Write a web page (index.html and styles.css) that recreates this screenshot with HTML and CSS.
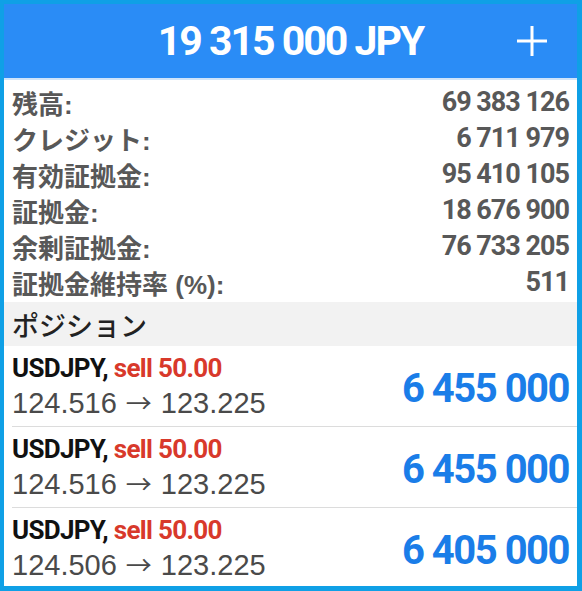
FILE: index.html
```html
<!DOCTYPE html>
<html lang="ja">
<head>
    <meta charset="UTF-8">
    <title>Account</title>
    <link rel="stylesheet" href="styles.css">
</head>
<body>
    <div class="frame">
        <div class="header">
            <span></span>
            <h1 class="balance">19 315 000 JPY</h1>
            <span class="add">
                <svg width="32" height="32" viewBox="0 0 32 32">
                    <path d="M16 1 V31 M1 16 H31" stroke="#fff" stroke-width="3" fill="none"/>
                </svg>
            </span>
        </div>

        <div class="summary">
            <div class="row"><span class="label">残高:</span><span class="value">69 383 126</span></div>
            <div class="row"><span class="label">クレジット:</span><span class="value">6 711 979</span></div>
            <div class="row"><span class="label">有効証拠金:</span><span class="value">95 410 105</span></div>
            <div class="row"><span class="label">証拠金:</span><span class="value">18 676 900</span></div>
            <div class="row"><span class="label">余剰証拠金:</span><span class="value">76 733 205</span></div>
            <div class="row"><span class="label">証拠金維持率 (%):</span><span class="value">511</span></div>
        </div>

        <div class="section">ポジション</div>

        <div class="positions">
            <div class="position">
                <div class="info">
                    <div class="symbol">USDJPY, <span class="sell">sell 50.00</span></div>
                    <div class="prices">124.516<span class="arrow">→</span>123.225</div>
                </div>
                <div class="profit">6 455 000</div>
            </div>
            <div class="position">
                <div class="info">
                    <div class="symbol">USDJPY, <span class="sell">sell 50.00</span></div>
                    <div class="prices">124.516<span class="arrow">→</span>123.225</div>
                </div>
                <div class="profit">6 455 000</div>
            </div>
            <div class="position">
                <div class="info">
                    <div class="symbol">USDJPY, <span class="sell">sell 50.00</span></div>
                    <div class="prices">124.506<span class="arrow">→</span>123.225</div>
                </div>
                <div class="profit">6 405 000</div>
            </div>
        </div>
    </div>
</body>
</html>
```

FILE: styles.css
```css
body {
    margin: 0;
    background: #0fa0e6;
    font-family: "Liberation Sans", "Noto Sans CJK JP", sans-serif;
}
.frame {
    width: 573px;
    height: 582px;
    margin: 4px 5px 5px 4px;
    background: #fff;
    overflow: hidden;
}
.header {
    height: 74px;
    background: #2a8cf6;
    border-bottom: 2px solid #cfe4fa;
    display: grid;
    grid-template-columns: 1fr auto 1fr;
    align-items: center;
}
.balance {
    margin: 0;
    color: #fff;
    font-family: "Roboto", sans-serif;
    font-size: 41px;
    font-weight: bold;
    letter-spacing: -2px;
}
.add {
    justify-self: end;
    padding-right: 29px;
    height: 32px;
}
.summary {
    padding: 4px 8px 2px 8px;
}
.row {
    height: 36px;
    display: flex;
    justify-content: space-between;
    align-items: center;
    color: #585858;
}
.label {
    font-family: "Liberation Sans", "Noto Sans CJK JP", sans-serif;
    font-size: 26px;
    font-weight: bold;
}
.value {
    font-family: "Roboto", sans-serif;
    font-size: 27px;
    font-weight: bold;
    letter-spacing: -1px;
}
.section {
    height: 44px;
    line-height: 46px;
    background: #f2f2f2;
    padding-left: 8px;
    color: #222;
    font-size: 27px;
    font-weight: 500;
    font-family: "Noto Sans CJK JP", sans-serif;
}
.position {
    height: 80px;
    margin-left: 8px;
    padding-right: 8px;
    border-bottom: 1px solid #dcdcdc;
    display: flex;
    justify-content: space-between;
    align-items: center;
}
.position:last-child {
    border-bottom: none;
}
.symbol {
    font-family: "Roboto", sans-serif;
    font-size: 26px;
    font-weight: bold;
    color: #111;
    line-height: 32px;
    letter-spacing: -0.7px;
}
.sell {
    color: #d8392b;
}
.prices {
    font-size: 29px;
    color: #4a4a4a;
    line-height: 36px;
}
.arrow {
    font-family: "Noto Sans CJK JP", sans-serif;
    font-size: 26px;
    margin: 0 9px;
}
.profit {
    font-family: "Roboto", sans-serif;
    font-size: 40px;
    font-weight: bold;
    color: #1a7de8;
    padding-top: 4px;
    letter-spacing: -1.5px;
}
```
